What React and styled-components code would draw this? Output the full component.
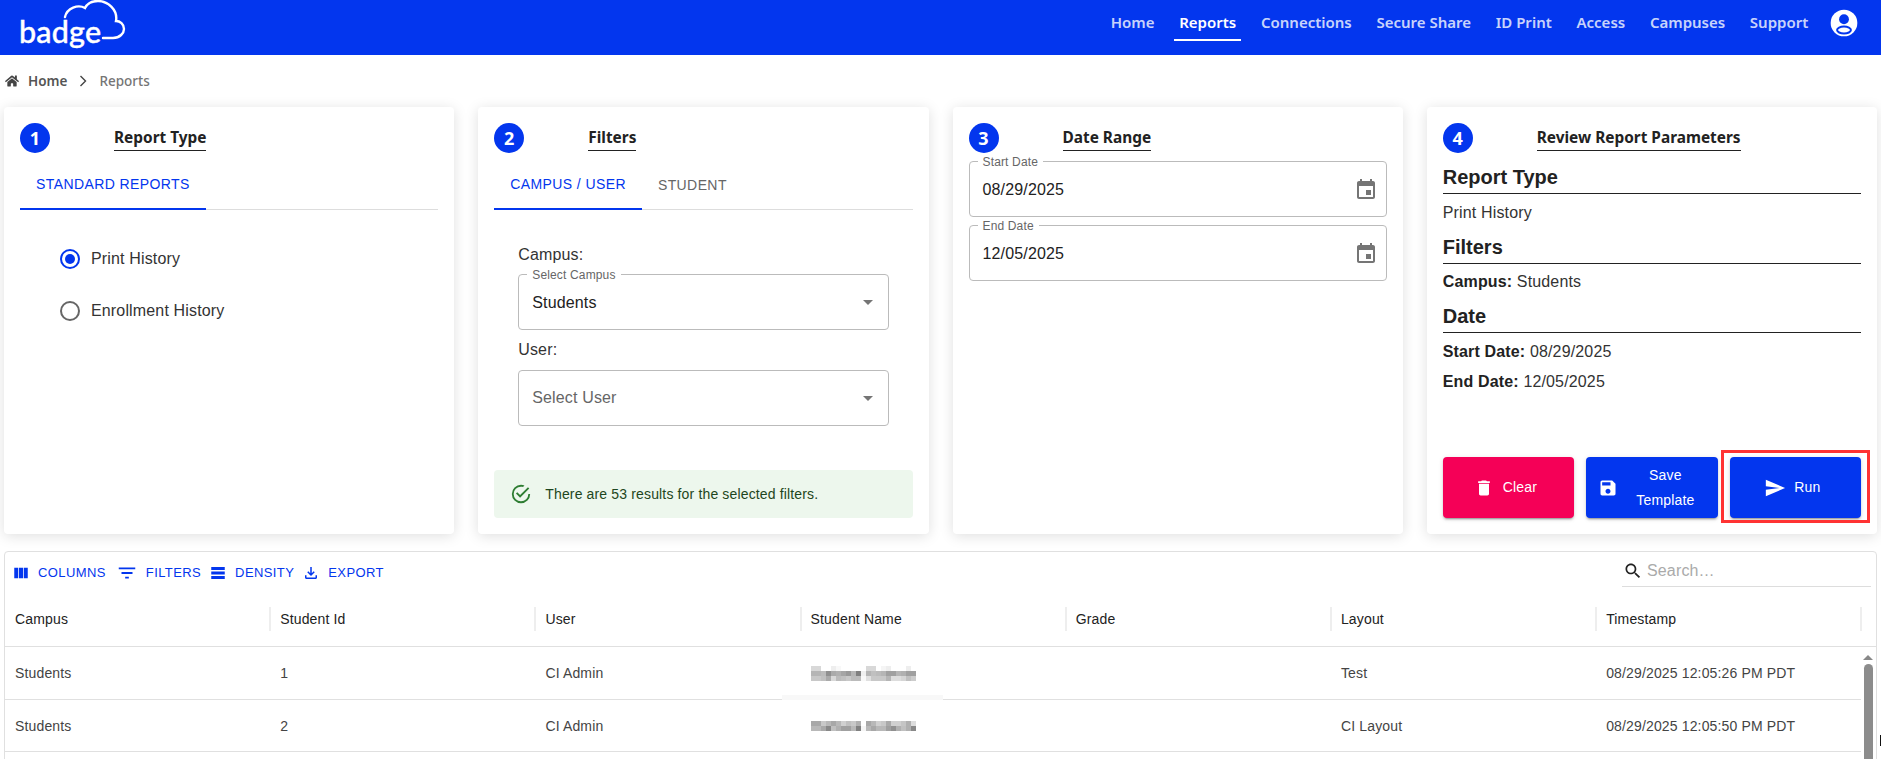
import React from 'react';
import styled, { createGlobalStyle } from 'styled-components';
import { FaHome } from 'react-icons/fa';

const BLUE = '#0336ee';

const GlobalStyle = createGlobalStyle`
  html, body {
    margin: 0;
    height: 100%;
    overflow: hidden;
    background: #fff;
    font-family: "Liberation Sans", Arial, sans-serif;
    letter-spacing: .15px;
  }
  * { box-sizing: border-box; }
`;

const Page = styled.div`
  height: 759px;
  overflow: hidden;
  position: relative;
`;

const AppBar = styled.header`
  height: 55px;
  background: ${BLUE};
  display: flex;
  align-items: flex-start;
  padding: 0 20.6px 0 20px;
`;

const Logo = styled.div`
  position: relative;
  width: 106px;
  height: 55px;
`;

const LogoText = styled.span`
  position: absolute;
  left: -1px;
  top: 11px;
  font-family: Lato, sans-serif;
  font-size: 30.5px;
  font-weight: 500;
  letter-spacing: .2px;
  line-height: 40px;
  color: #fff;
  -webkit-text-stroke: .4px #fff;
`;

const LogoCloud = styled.svg`
  position: absolute;
  left: -20px;
  top: 0;
`;

const Nav = styled.nav`
  margin-left: auto;
  display: flex;
  align-items: flex-start;
  gap: 14.7px;
`;

const NavLink = styled.a`
  height: 41px;
  padding: 4px 5px 0;
  display: flex;
  align-items: center;
  font-family: "Noto Sans", sans-serif;
  font-size: 15px;
  font-weight: 600;
  letter-spacing: 0;
  white-space: nowrap;
  color: ${(p) => (p.$active ? '#fff' : 'rgba(255,255,255,.8)')};
  border-bottom: 2px solid ${(p) => (p.$active ? '#fff' : 'transparent')};
`;

const Avatar = styled.svg`
  width: 32px;
  height: 32px;
  margin: 7px 0 0 .4px;
`;

const Crumbs = styled.div`
  height: 52px;
  display: flex;
  align-items: center;
  padding-left: 5px;
  font-family: "Noto Sans", sans-serif;
  font-size: 13.5px;
  letter-spacing: 0;
`;

const HomeIcon = styled(FaHome)`
  width: 14px;
  height: 14px;
  color: #444;
`;

const CrumbHome = styled.span`
  margin-left: 9px;
  font-weight: 600;
  color: #555;
`;

const CrumbCurrent = styled.span`
  font-weight: 500;
  color: #757575;
`;

const CrumbArrow = styled.svg`
  width: 20px;
  height: 20px;
  margin: 0 6px 0 6px;
  fill: none;
  stroke: #444;
  stroke-width: 1.4;
`;

const Cards = styled.section`
  display: grid;
  grid-template-columns: repeat(4, 1fr);
  gap: 24px;
  padding: 0 4px;
`;

const Card = styled.div`
  height: 427px;
  padding: 16px;
  border-radius: 4px;
  background: #fff;
  box-shadow: 0 2px 14px rgba(0, 0, 0, .13);
  display: flex;
  flex-direction: column;
`;

const CardHead = styled.div`
  height: 30px;
  display: flex;
  align-items: flex-start;
  flex: none;
`;

const Step = styled.div`
  width: 30px;
  height: 30px;
  border-radius: 50%;
  background: ${BLUE};
  color: #fff;
  display: flex;
  align-items: center;
  justify-content: center;
  font-family: "Noto Sans", sans-serif;
  font-size: 18px;
  font-weight: 700;
`;

const CardTitle = styled.h2`
  margin: 4px 0 0 64px;
  height: 24px;
  line-height: 22px;
  border-bottom: 1px solid #222;
  font-family: "Noto Sans", sans-serif;
  font-size: 15.4px;
  font-weight: 700;
  letter-spacing: 0;
  color: #222;
`;

const Tabs = styled.div`
  margin-top: 7px;
  height: 50px;
  flex: none;
  display: flex;
  border-bottom: 1px solid #ddd;
`;

const Tab = styled.div`
  height: 50px;
  padding: 0 16px;
  display: flex;
  align-items: center;
  font-size: 14px;
  letter-spacing: .4px;
  text-transform: uppercase;
  color: ${(p) => (p.$active ? BLUE : '#666')};
  border-bottom: ${(p) => (p.$active ? `2px solid ${BLUE}` : 'none')};
`;

const RadioList = styled.div`
  padding: 28px 0 0 40px;
  display: flex;
  flex-direction: column;
  gap: 10px;
`;

const RadioRow = styled.label`
  height: 42px;
  display: flex;
  align-items: center;
  gap: 11px;
  font-size: 16px;
  color: #333;
`;

const RadioMark = styled.span`
  width: 20px;
  height: 20px;
  border-radius: 50%;
  border: 2px solid ${(p) => (p.$on ? BLUE : '#666')};
  display: flex;
  align-items: center;
  justify-content: center;
  &::after {
    content: '';
    display: ${(p) => (p.$on ? 'block' : 'none')};
    width: 10px;
    height: 10px;
    border-radius: 50%;
    background: ${BLUE};
  }
`;

const FilterForm = styled.div`
  padding: 33px 24px 0 24px;
`;

const FieldLabel = styled.div`
  height: 24px;
  line-height: 24px;
  font-size: 16px;
  color: #333;
  margin-bottom: ${(p) => p.$gap}px;
`;

const Outlined = styled.div`
  position: relative;
  height: 56px;
  flex: none;
  padding: ${(p) => (p.$muted ? '0' : '1px')} 13px 0;
  display: flex;
  align-items: center;
  justify-content: space-between;
  border: 1px solid #bbb;
  border-radius: 4px;
  font-size: 16px;
  color: ${(p) => (p.$muted ? '#666' : '#222')};
  margin-bottom: 8px;
`;

const Floating = styled.span`
  position: absolute;
  left: 8px;
  top: -7px;
  padding: 0 5px;
  background: #fff;
  font-size: 12px;
  line-height: 14px;
  color: #666;
`;

const Caret = styled.span`
  width: 0;
  height: 0;
  margin-right: 2px;
  border-left: 5px solid transparent;
  border-right: 5px solid transparent;
  border-top: 5px solid #757575;
`;

const Alert = styled.div`
  margin-top: auto;
  height: 48px;
  flex: none;
  border-radius: 4px;
  background: #edf7ed;
  color: #1e4620;
  padding: 0 16px;
  display: flex;
  align-items: center;
  gap: 13px;
  font-size: 14px;
`;

const AlertIcon = styled.svg`
  width: 22px;
  height: 22px;
  fill: #2e7d32;
`;

const DateList = styled.div`
  margin-top: 8px;
`;

const Icon = styled.svg`
  width: ${(p) => p.$size || 24}px;
  height: ${(p) => p.$size || 24}px;
  fill: ${(p) => p.$color || 'currentColor'};
  flex: none;
`;

const CalendarIcon = styled(Icon)`
  margin-right: -5px;
`;

const ReviewHeading = styled.h3`
  margin: ${(p) => (p.$first ? '7px' : '0')} 0 0;
  height: 34px;
  line-height: 34px;
  border-bottom: 1px solid #222;
  font-size: 20px;
  font-weight: 700;
  letter-spacing: 0;
  color: #222;
  padding-bottom: 2px;
`;

const ReviewLine = styled.div`
  height: ${(p) => p.$h || 35.5}px;
  padding-top: 2px;
  display: flex;
  align-items: center;
  font-size: 16px;
  color: #333;
  white-space: pre;
  b { color: #222; }
`;

const Actions = styled.div`
  margin-top: auto;
  display: grid;
  grid-template-columns: repeat(3, 1fr);
  gap: 12px;
  position: relative;
`;

const ActionButton = styled.button`
  height: 61px;
  border: 0;
  border-radius: 4px;
  background: ${(p) => p.$bg || BLUE};
  color: #fff;
  font-family: "Liberation Sans", Arial, sans-serif;
  font-size: 14px;
  letter-spacing: .15px;
  line-height: 25px;
  display: flex;
  align-items: center;
  justify-content: center;
  gap: ${(p) => p.$gap}px;
  padding: ${(p) => p.$pad || '0 20px 0 14px'};
  box-shadow: 0 3px 1px -2px rgba(0,0,0,.2), 0 2px 2px rgba(0,0,0,.14), 0 1px 5px rgba(0,0,0,.12);
`;

const SaveLabel = styled.span`
  flex: 1;
  text-align: center;
`;

const Highlight = styled.div`
  position: absolute;
  right: -9px;
  bottom: -5px;
  width: 149px;
  height: 73px;
  border: 3px solid #f33;
  pointer-events: none;
`;

const Grid = styled.section`
  margin: 17px 4px 0;
  height: 400px;
  border: 1px solid #e0e0e0;
  border-radius: 4px;
  position: relative;
`;

const GridToolbar = styled.div`
  height: 47px;
  padding: 0 5px 0 7px;
  display: flex;
  align-items: flex-start;
`;

const ToolButton = styled.div`
  height: 40px;
  display: flex;
  align-items: center;
  gap: ${(p) => p.$gap}px;
  margin-right: ${(p) => p.$mr}px;
  font-size: 13px;
  letter-spacing: .4px;
  text-transform: uppercase;
  color: ${BLUE};
  padding-top: 1px;
`;

const SearchBox = styled.div`
  margin-left: auto;
  margin-top: 8px;
  width: 249px;
  height: 27px;
  border-bottom: 1px solid #ddd;
  display: flex;
  align-items: center;
  gap: 4px;
  padding-left: 1px;
  font-size: 16px;
  color: #aaa;
  padding-bottom: 4px;
`;

const Row = styled.div`
  display: grid;
  grid-template-columns: repeat(7, 265.2px);
  height: ${(p) => (p.$head ? '48px' : '52.5px')};
  align-items: center;
  border-bottom: 1px solid #e0e0e0;
  width: ${(p) => (p.$head ? 'auto' : '1856px')};
  padding-top: ${(p) => (p.$head ? '0' : '1px')};
`;

const HeadCell = styled.div`
  position: relative;
  padding-left: 10px;
  margin-top: -8px;
  font-size: 14px;
  color: #222;
  &::after {
    content: '';
    position: absolute;
    right: -1px;
    top: -4px;
    height: 24px;
    width: 2px;
    background: #eee;
  }
`;

const Cell = styled.div`
  padding-left: 10px;
  font-size: 14px;
  color: #444;
  white-space: nowrap;
`;

const Blurred = styled.svg`
  display: block;
  shape-rendering: crispEdges;
`;

const ScrollBar = styled.div`
  position: absolute;
  right: 3px;
  top: 98px;
  width: 10px;
  bottom: 0;
  display: flex;
  flex-direction: column;
  align-items: center;
`;

const ScrollArrow = styled.span`
  width: 0;
  height: 0;
  margin-top: 5px;
  border-left: 5px solid transparent;
  border-right: 5px solid transparent;
  border-bottom: 5px solid #888;
`;

const ScrollThumb = styled.span`
  margin-top: 4px;
  width: 9px;
  flex: 1;
  border-radius: 5px 5px 0 0;
  background: #8c8c8c;
`;

const Smudge = styled.div`
  position: absolute;
  left: 777px;
  top: 143px;
  width: 161px;
  height: 5px;
  background: #f8f8f8;
`;

const CursorMark = styled.div`
  position: absolute;
  right: 0;
  top: 735px;
  width: 1px;
  height: 11px;
  background: #111;
`;

// pixelated names from the reference, 5px cells, grey level per cell
const blur1 = [
  'd8 d8 ff ff ee f8 ff ff ff ff ff d8 d8 ff f5 ee ff ff ff ee ff',
  'b5 b5 bb 90 aa b0 a5 99 b5 80 f0 b5 c0 bb b5 a0 a0 b5 b0 a0 a0',
  'c8 c8 c0 aa d8 bb c0 c8 bb bb f8 e0 c8 c8 c8 b5 dd dd d5 c0 cc',
];
const blur2 = [
  'a8 a8 c8 b8 a8 b8 d0 c0 c8 b0 ff a8 b8 d0 c8 aa d0 d0 c5 b0 dd',
  'b8 b8 a8 88 c0 b0 a0 a0 b8 80 f5 b8 a8 b8 b8 a0 90 b0 c0 b0 88',
];

function BlurName({ rows }) {
  return (
    <Blurred width="105" height={rows.length * 5}>
      {rows.map((line, y) =>
        line.split(' ').map((g, x) => (
          <rect key={`${x}-${y}`} x={x * 5} y={y * 5} width="5" height="5" fill={`#${g}${g}${g}`} />
        ))
      )}
    </Blurred>
  );
}

const P = {
  success: 'M20,12A8,8 0 0,1 12,20A8,8 0 0,1 4,12A8,8 0 0,1 12,4C12.76,4 13.5,4.11 14.2,4.31L15.77,2.74C14.61,2.26 13.34,2 12,2A10,10 0 0,0 2,12A10,10 0 0,0 12,22A10,10 0 0,0 22,12M7.91,10.08L6.5,11.5L11,16L21,6L19.59,4.58L11,13.17L7.91,10.08Z',
  event: 'M17 12h-5v5h5v-5zM16 1v2H8V1H6v2H5c-1.11 0-1.99.9-1.99 2L3 19c0 1.1.89 2 2 2h14c1.1 0 2-.9 2-2V5c0-1.1-.9-2-2-2h-1V1h-2zm3 18H5V8h14v11z',
  trash: 'M6 19c0 1.1.9 2 2 2h8c1.1 0 2-.9 2-2V7H6v12zM19 4h-3.5l-1-1h-5l-1 1H5v2h14V4z',
  save: 'M17 3H5c-1.11 0-2 .9-2 2v14c0 1.1.89 2 2 2h14c1.1 0 2-.9 2-2V7l-4-4zm-5 16c-1.66 0-3-1.34-3-3s1.34-3 3-3 3 1.34 3 3-1.34 3-3 3zm3-10H5V5h10v4z',
  send: 'M2.01 21 23 12 2.01 3 2 10l15 2-15 2z',
  columns: 'M14.67 5v14H9.33V5h5.34zm1 14H21V5h-5.33v14zm-7.34 0V5H3v14h5.33z',
  filter: 'M10 18h4v-2h-4v2zM3 6v2h18V6H3zm3 7h12v-2H6v2z',
  density: 'M21 8H3V4h18v4zm0 2H3v4h18v-4zm0 6H3v4h18v-4z',
  download: 'M18 15v3H6v-3H4v3c0 1.1.9 2 2 2h12c1.1 0 2-.9 2-2v-3h-2zm-1-4-1.41-1.41L13 12.17V4h-2v8.17L8.41 9.59 7 11l5 5 5-5z',
  search: 'M15.5 14h-.79l-.28-.27C15.41 12.59 16 11.11 16 9.5 16 5.91 13.09 3 9.5 3S3 5.91 3 9.5 5.91 16 9.5 16c1.61 0 3.09-.59 4.23-1.57l.27.28v.79l5 4.99L20.49 19l-4.99-5zm-6 0C7.01 14 5 11.99 5 9.5S7.01 5 9.5 5 14 7.01 14 9.5 11.99 14 9.5 14z',
};

const Glyph = ({ d, size, color }) => (
  <Icon viewBox="0 0 24 24" $size={size} $color={color}><path d={d} /></Icon>
);

const navItems = ['Home', 'Reports', 'Connections', 'Secure Share', 'ID Print', 'Access', 'Campuses', 'Support'];
const columns = ['Campus', 'Student Id', 'User', 'Student Name', 'Grade', 'Layout', 'Timestamp'];
const rows = [
  { id: '1', blur: blur1, layout: 'Test', time: '08/29/2025 12:05:26 PM PDT' },
  { id: '2', blur: blur2, layout: 'CI Layout', time: '08/29/2025 12:05:50 PM PDT' },
];

export default function App() {
  return (
    <Page>
      <GlobalStyle />
      <AppBar>
        <Logo>
          <LogoText>badge</LogoText>
          <LogoCloud width="130" height="50" viewBox="0 0 130 50" fill="none" stroke="#fff" strokeWidth="2.4" strokeLinecap="round">
            <path d="M103 38 H113 C120 38 124 33 124 29 C124 24 120 21 116 21 C118 10 108 1 98 1 C92 1 87 4 85 8 C78 4 67 8 65 17" />
          </LogoCloud>
        </Logo>
        <Nav>
          {navItems.map((n) => (
            <NavLink key={n} $active={n === 'Reports'}>{n}</NavLink>
          ))}
          <Avatar viewBox="0 0 24 24">
            <circle cx="12" cy="12" r="10" fill="#fff" />
            <circle cx="12" cy="9.2" r="3.7" fill={BLUE} />
            <ellipse cx="12" cy="17.3" rx="5.2" ry="2.6" fill="#fff" stroke={BLUE} strokeWidth="1.5" />
          </Avatar>
        </Nav>
      </AppBar>

      <Crumbs>
        <HomeIcon />
        <CrumbHome>Home</CrumbHome>
        <CrumbArrow viewBox="0 0 20 20"><path d="M7.5 5 L12.5 10 L7.5 15" /></CrumbArrow>
        <CrumbCurrent>Reports</CrumbCurrent>
      </Crumbs>

      <Cards>
        <Card>
          <CardHead><Step>1</Step><CardTitle>Report Type</CardTitle></CardHead>
          <Tabs><Tab $active>Standard Reports</Tab></Tabs>
          <RadioList>
            <RadioRow><RadioMark $on />Print History</RadioRow>
            <RadioRow><RadioMark />Enrollment History</RadioRow>
          </RadioList>
        </Card>

        <Card>
          <CardHead><Step>2</Step><CardTitle>Filters</CardTitle></CardHead>
          <Tabs><Tab $active>Campus / User</Tab><Tab>Student</Tab></Tabs>
          <FilterForm>
            <FieldLabel $gap={7}>Campus:</FieldLabel>
            <Outlined>
              <Floating>Select Campus</Floating>
              Students
              <Caret />
            </Outlined>
            <FieldLabel $gap={8}>User:</FieldLabel>
            <Outlined $muted>
              Select User
              <Caret />
            </Outlined>
          </FilterForm>
          <Alert>
            <AlertIcon viewBox="0 0 24 24"><path d={P.success} /></AlertIcon>
            There are 53 results for the selected filters.
          </Alert>
        </Card>

        <Card>
          <CardHead><Step>3</Step><CardTitle>Date Range</CardTitle></CardHead>
          <DateList>
            <Outlined>
              <Floating>Start Date</Floating>
              08/29/2025
              <CalendarIcon viewBox="0 0 24 24" $color="#757575"><path d={P.event} /></CalendarIcon>
            </Outlined>
            <Outlined>
              <Floating>End Date</Floating>
              12/05/2025
              <CalendarIcon viewBox="0 0 24 24" $color="#757575"><path d={P.event} /></CalendarIcon>
            </Outlined>
          </DateList>
        </Card>

        <Card>
          <CardHead><Step>4</Step><CardTitle>Review Report Parameters</CardTitle></CardHead>
          <ReviewHeading $first>Report Type</ReviewHeading>
          <ReviewLine>Print History</ReviewLine>
          <ReviewHeading>Filters</ReviewHeading>
          <ReviewLine><b>Campus: </b>Students</ReviewLine>
          <ReviewHeading>Date</ReviewHeading>
          <ReviewLine $h={36}><b>Start Date: </b>08/29/2025</ReviewLine>
          <ReviewLine $h={24}><b>End Date: </b>12/05/2025</ReviewLine>
          <Actions>
            <ActionButton $bg="#f50057" $gap={9}><Glyph d={P.trash} size={20} />Clear</ActionButton>
            <ActionButton $gap={9} $pad="0 14px 0 12px"><Glyph d={P.save} size={20} /><SaveLabel>Save Template</SaveLabel></ActionButton>
            <ActionButton $gap={8}><Glyph d={P.send} size={22} />Run</ActionButton>
            <Highlight />
          </Actions>
        </Card>
      </Cards>

      <Grid>
        <GridToolbar>
          <ToolButton $gap={8} $mr={10}><Glyph d={P.columns} size={18} />Columns</ToolButton>
          <ToolButton $gap={8} $mr={8}><Glyph d={P.filter} size={22} />Filters</ToolButton>
          <ToolButton $gap={8} $mr={8}><Glyph d={P.density} size={18} />Density</ToolButton>
          <ToolButton $gap={8} $mr={0}><Glyph d={P.download} size={18} />Export</ToolButton>
          <SearchBox><Glyph d={P.search} size={20} color="#222" />Search…</SearchBox>
        </GridToolbar>
        <Row $head>
          {columns.map((c) => <HeadCell key={c}>{c}</HeadCell>)}
        </Row>
        {rows.map((r) => (
          <Row key={r.id}>
            <Cell>Students</Cell>
            <Cell>{r.id}</Cell>
            <Cell>CI Admin</Cell>
            <Cell><BlurName rows={r.blur} /></Cell>
            <Cell />
            <Cell>{r.layout}</Cell>
            <Cell>{r.time}</Cell>
          </Row>
        ))}
        <Smudge />
        <ScrollBar><ScrollArrow /><ScrollThumb /></ScrollBar>
      </Grid>
      <CursorMark />
    </Page>
  );
}
